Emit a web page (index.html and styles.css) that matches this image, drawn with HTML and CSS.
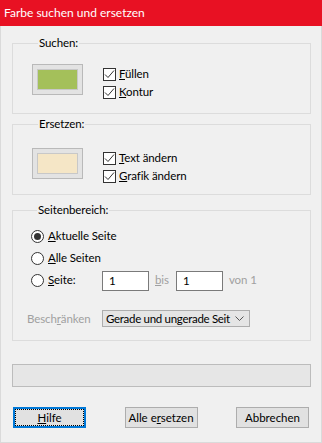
FILE: index.html
```html
<!DOCTYPE html>
<html lang="de">
<head>
  <meta charset="UTF-8">
  <title>Farbe suchen und ersetzen</title>
  <link rel="stylesheet" href="styles.css">
</head>
<body>
  <div class="window">
    <div class="titlebar">Farbe suchen und ersetzen</div>

    <div class="content">
      <div class="group group-find">
        <div class="legend">Suchen:</div>
        <div class="swatch-row">
          <div class="swatch"><div class="swatch-fill green"></div></div>
          <div class="checks">
            <div class="check"><span class="box"><svg width="11" height="11" viewBox="0 0 11 11"><polyline points="1,5.5 4,8.5 10,1.5" fill="none" stroke="#333" stroke-width="1"/></svg></span><span><u>F</u>üllen</span></div>
            <div class="check"><span class="box"><svg width="11" height="11" viewBox="0 0 11 11"><polyline points="1,5.5 4,8.5 10,1.5" fill="none" stroke="#333" stroke-width="1"/></svg></span><span><u>K</u>ontur</span></div>
          </div>
        </div>
      </div>

      <div class="group group-replace">
        <div class="legend">Ersetzen:</div>
        <div class="swatch-row">
          <div class="swatch"><div class="swatch-fill cream"></div></div>
          <div class="checks">
            <div class="check"><span class="box"><svg width="11" height="11" viewBox="0 0 11 11"><polyline points="1,5.5 4,8.5 10,1.5" fill="none" stroke="#333" stroke-width="1"/></svg></span><span><u>T</u>ext ändern</span></div>
            <div class="check"><span class="box"><svg width="11" height="11" viewBox="0 0 11 11"><polyline points="1,5.5 4,8.5 10,1.5" fill="none" stroke="#333" stroke-width="1"/></svg></span><span><u>G</u>rafik ändern</span></div>
          </div>
        </div>
      </div>

      <div class="group group-range">
        <div class="legend">Seitenbereich:</div>
        <div class="radios">
          <div class="radio-row">
            <span class="radio selected"></span><span><u>A</u>ktuelle Seite</span>
          </div>
          <div class="radio-row">
            <span class="radio"></span><span><u>A</u>lle Seiten</span>
          </div>
          <div class="radio-row">
            <div class="radio-label">
              <span class="radio"></span><span><u>S</u>eite:</span>
            </div>
            <div class="field">1</div>
            <span class="muted bis"><u>b</u>is</span>
            <div class="field">1</div>
            <span class="muted von">von 1</span>
          </div>
        </div>
        <div class="limit-row">
          <span class="muted limit-label">Besch<u>r</u>änken</span>
          <div class="select">
            <span class="select-text">Gerade und ungerade Seit</span>
            <svg width="9" height="6" viewBox="0 0 9 6"><polyline points="0.5,0.5 4.5,4.5 8.5,0.5" fill="none" stroke="#555" stroke-width="1"/></svg>
          </div>
        </div>
      </div>

      <div class="progress"></div>

      <div class="buttons">
        <button class="button default"><u>H</u>ilfe</button>
        <button class="button">Alle e<u>r</u>setzen</button>
        <button class="button">Abbrechen</button>
      </div>
    </div>
  </div>
</body>
</html>
```

FILE: styles.css
```css
body {
  margin: 0;
  font-family: Lato, "Noto Sans", sans-serif;
  font-size: 11.5px;
  letter-spacing: -0.1px;
  line-height: 16px;
  color: #000;
  background-color: #f0f0f0;
  white-space: nowrap;
}

.window {
  width: 322px;
  height: 443px;
  display: flex;
  flex-direction: column;
}

.titlebar {
  flex-shrink: 0;
  height: 26px;
  line-height: 26px;
  padding-left: 4px;
  font-size: 12px;
  letter-spacing: 0;
  background-color: #e81123;
  color: #fff;
}

.content {
  flex: 1;
  display: flex;
  flex-direction: column;
  padding: 17px 10px 0 11px;
  border: 1px solid #dadada;
  border-top: none;
}

.group {
  flex-shrink: 0;
  display: flex;
  flex-direction: column;
  border: 1px solid #dcdcdc;
}

.legend {
  align-self: flex-start;
  margin: -9px 0 0 6px;
  padding: 0 1px;
  background-color: #f0f0f0;
}

.group-find {
  padding: 0 0 12px 19px;
}

.group-find .swatch-row {
  margin-top: 13px;
}

.group-replace {
  margin-top: 10px;
  padding: 0 0 9px 19px;
}

.group-replace .swatch-row {
  margin-top: 16px;
}

.swatch-row {
  display: flex;
  align-items: flex-start;
  gap: 20px;
}

.swatch {
  width: 51px;
  height: 31px;
  box-sizing: border-box;
  padding: 4px;
  border: 1px solid #b9b9b9;
  background-color: #e3e3e3;
  display: flex;
}

.swatch-fill {
  flex: 1;
  border: 1px solid #c8c8c8;
}

.green {
  background-color: #a4c05a;
}

.cream {
  background-color: #f5e6c6;
}

.checks {
  display: flex;
  flex-direction: column;
  padding-top: 1px;
}

.check {
  display: flex;
  align-items: center;
  gap: 3px;
  height: 18px;
}

.box {
  width: 13px;
  height: 13px;
  box-sizing: border-box;
  border: 1px solid #333;
  background-color: #fff;
  display: flex;
}

.group-range {
  margin-top: 15px;
  padding: 0 0 13px 18px;
}

.radios {
  display: flex;
  flex-direction: column;
  margin-top: 7px;
}

.radio-row {
  display: flex;
  align-items: center;
  height: 22px;
}

.radio-row > .radio,
.radio-label .radio {
  margin-right: 4px;
}

.radio-label {
  display: flex;
  align-items: center;
  width: 71px;
}

.radio {
  width: 13px;
  height: 13px;
  box-sizing: border-box;
  border: 1px solid #333;
  border-radius: 50%;
  background-color: #fff;
  display: flex;
  align-items: center;
  justify-content: center;
}

.radio.selected::after {
  content: "";
  width: 7px;
  height: 7px;
  border-radius: 50%;
  background-color: #333;
}

.field {
  width: 47px;
  height: 20px;
  box-sizing: border-box;
  border: 1px solid #7a7a7a;
  background-color: #fff;
  padding-left: 6px;
  line-height: 18px;
  margin-top: 2px;
}

.muted {
  color: #a0a0a0;
}

.bis {
  margin: 0 7px 0 6px;
}

.von {
  margin-left: 6px;
}

.limit-row {
  display: flex;
  align-items: center;
  margin-top: 19px;
}

.limit-label {
  width: 75px;
  margin-left: -4px;
}

.select {
  width: 148px;
  height: 17px;
  box-sizing: border-box;
  border: 1px solid #adadad;
  background-color: #e5e5e5;
  display: flex;
  align-items: center;
  justify-content: space-between;
  padding: 0 5px 0 3px;
}

.select-text {
  letter-spacing: -0.3px;
}

.progress {
  flex-shrink: 0;
  height: 23px;
  box-sizing: border-box;
  margin-top: 23px;
  border: 1px solid #bcbcbc;
  background-color: #e6e6e6;
}

.buttons {
  display: flex;
  justify-content: space-between;
  margin: 20px 2px 0 1px;
}

.button {
  width: 73px;
  height: 21px;
  box-sizing: border-box;
  padding: 0;
  font: inherit;
  line-height: 17px;
  color: #000;
  background-color: #e1e1e1;
  border: 1px solid #adadad;
}

.button.default {
  border: 2px solid #0078d7;
  outline: 1px dotted #000;
  outline-offset: -3px;
}
```
